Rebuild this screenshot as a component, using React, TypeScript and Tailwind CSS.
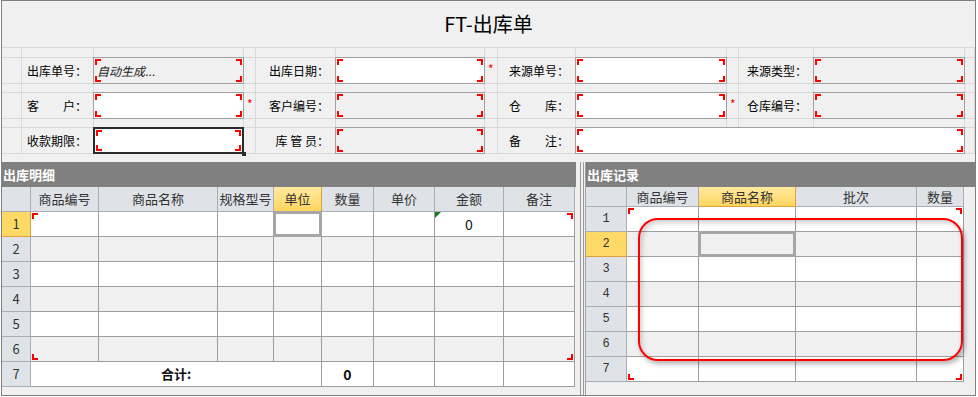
import React from 'react'

// red corner marks drawn inside a cell or field
function Brackets({ tl = true, tr = true, bl = true, br = true }: { tl?: boolean; tr?: boolean; bl?: boolean; br?: boolean }) {
  return (
    <>
      {tl && <span className="pointer-events-none absolute left-[1px] top-[1px] w-[6px] h-[6px] border-l-2 border-t-2 border-[#ff0000]" />}
      {tr && <span className="pointer-events-none absolute right-[1px] top-[1px] w-[6px] h-[6px] border-r-2 border-t-2 border-[#ff0000]" />}
      {bl && <span className="pointer-events-none absolute left-[1px] bottom-[1px] w-[6px] h-[6px] border-l-2 border-b-2 border-[#ff0000]" />}
      {br && <span className="pointer-events-none absolute right-[1px] bottom-[1px] w-[6px] h-[6px] border-r-2 border-b-2 border-[#ff0000]" />}
    </>
  )
}

function Cell() {
  return <div className="bg-[#f0f0f0]" />
}

function Label({ t }: { t: string }) {
  return <div className="bg-[#f0f0f0] flex items-center justify-end pr-[6px] text-[12px] text-black whitespace-pre">{t}</div>
}

function Star() {
  return <div className="bg-[#f0f0f0] flex items-center pl-[3px] pb-[4px] text-[12px] text-[#ff0000]">*</div>
}

function Field({ ro, sel, text, className = '' }: { ro?: boolean; sel?: boolean; text?: string; className?: string }) {
  return (
    <div
      className={`relative -m-px flex items-center ${ro ? 'bg-[#f0f0f0]' : 'bg-white'} ${sel ? 'border-2 border-[#2b2b2b]' : 'border border-[#a0a0a0]'} ${className}`}
    >
      {text && <span className="pl-[3px] text-[12px] italic text-[#222]">{text}</span>}
      <Brackets />
      {sel && <span className="absolute -right-[4px] -bottom-[4px] w-[4px] h-[4px] bg-[#2b2b2b]" />}
    </div>
  )
}

function Spacers() {
  return (
    <>
      {Array.from({ length: 13 }).map((_, i) => (
        <Cell key={i} />
      ))}
    </>
  )
}

function HeadForm() {
  return (
    <div className="grid grid-cols-[19px_71px_149px_11px_79px_148px_12px_77px_150px_11px_74px_150px_9px] grid-rows-[9px_25px_8px_25px_8px_25px] gap-px bg-[#d9d9d9] border-y border-[#d9d9d9]">
      <Spacers />
      <Cell />
      <Label t="出库单号：" />
      <Field ro text="自动生成..." />
      <Cell />
      <Label t="出库日期：" />
      <Field />
      <Star />
      <Label t="来源单号：" />
      <Field />
      <Cell />
      <Label t="来源类型：" />
      <Field ro />
      <Cell />

      <Spacers />
      <Cell />
      <Label t="客　　户：" />
      <Field />
      <Star />
      <Label t="客户编号：" />
      <Field ro />
      <Cell />
      <Label t="仓　　库：" />
      <Field />
      <Star />
      <Label t="仓库编号：" />
      <Field ro />
      <Cell />

      <Spacers />
      <Cell />
      <Label t="收款期限：" />
      <Field sel />
      <Cell />
      <Label t="库 管 员：" />
      <Field ro />
      <Cell />
      <Label t="备　　注：" />
      <Field className="col-span-4" />
      <Cell />
    </div>
  )
}

function Selection() {
  return (
    <>
      <span className="pointer-events-none absolute -left-px -top-px -right-px -bottom-px border-[3px] border-[#a6a6a6]" />
      <span className="pointer-events-none absolute -right-[3px] -bottom-[3px] w-[5px] h-[5px] bg-[#a6a6a6]" />
    </>
  )
}

function LeftTable() {
  const heads = ['商品编号', '商品名称', '规格型号', '单位', '数量', '单价', '金额', '备注']
  return (
    <div className="grid grid-cols-[29px_68px_119px_56px_48px_52px_61px_69px_71px] auto-rows-[25px] text-[13px]">
      <div className="bg-[#dfe3e8] border-r border-b border-[#a9aeb6]" />
      {heads.map(h =>
        h === '单位' ? (
          <div key={h} className="bg-linear-to-b from-[#ffeaa0] to-[#ffd45c] border-r border-b border-[#e0a33a] flex items-center justify-center text-[#333]">{h}</div>
        ) : (
          <div key={h} className="bg-[#dfe3e8] border-r border-b border-[#a9aeb6] flex items-center justify-center text-[#333]">{h}</div>
        )
      )}
      {[1, 2, 3, 4, 5, 6].map(r => {
        const bg = r % 2 === 0 ? 'bg-[#f0f0f0]' : 'bg-white'
        return (
          <React.Fragment key={r}>
            {r === 1 ? (
              <div className="bg-[#ffd966] border-r border-b border-[#e0a33a] flex items-center justify-center text-[#333]">{r}</div>
            ) : (
              <div className="bg-[#dfe3e8] border-r border-b border-[#a9aeb6] flex items-center justify-center text-[#333]">{r}</div>
            )}
            {heads.map((h, c) => (
              <div key={h} className={`relative ${bg} border-r border-b border-[#9e9e9e] flex items-center justify-center text-[14px] text-[#111]`}>
                {r === 1 && c === 0 && <Brackets tr={false} bl={false} br={false} />}
                {r === 1 && c === 7 && <Brackets tl={false} bl={false} br={false} />}
                {r === 6 && c === 0 && <Brackets tl={false} tr={false} br={false} />}
                {r === 6 && c === 7 && <Brackets tl={false} tr={false} bl={false} />}
                {r === 1 && c === 3 && <Selection />}
                {r === 1 && c === 6 && (
                  <>
                    <span className="absolute left-0 top-0 w-0 h-0 border-t-[6px] border-r-[6px] border-t-[#1e7a1e] border-r-transparent" />
                    0
                  </>
                )}
              </div>
            ))}
          </React.Fragment>
        )
      })}
      <div className="bg-[#dfe3e8] border-r border-b border-[#a9aeb6] flex items-center justify-center text-[#333]">7</div>
      <div className="col-span-4 bg-white border-r border-b border-[#9e9e9e] flex items-center justify-center font-bold text-[#111]">合计:</div>
      <div className="bg-white border-r border-b border-[#9e9e9e] flex items-center justify-center font-bold text-[14px] text-[#111]">0</div>
      <div className="bg-white border-r border-b border-[#9e9e9e]" />
      <div className="bg-white border-r border-b border-[#9e9e9e]" />
      <div className="bg-white border-r border-b border-[#9e9e9e]" />
    </div>
  )
}

function RightTable() {
  const heads = ['商品编号', '商品名称', '批次', '数量']
  return (
    <div className="grid grid-cols-[41px_72px_97px_121px_47px] grid-rows-[20px_repeat(7,25px)] text-[12px]">
      <div className="bg-[#dfe3e8] border-r border-b border-[#a9aeb6]" />
      {heads.map(h =>
        h === '商品名称' ? (
          <div key={h} className="bg-linear-to-b from-[#ffeaa0] to-[#ffd45c] border-r border-b border-[#e0a33a] flex items-center justify-center text-[13px] text-[#333]">{h}</div>
        ) : (
          <div key={h} className="bg-[#dfe3e8] border-r border-b border-[#a9aeb6] flex items-center justify-center text-[13px] text-[#333]">{h}</div>
        )
      )}
      {[1, 2, 3, 4, 5, 6, 7].map(r => {
        const bg = r % 2 === 0 ? 'bg-[#f0f0f0]' : 'bg-white'
        return (
          <React.Fragment key={r}>
            {r === 2 ? (
              <div className="bg-[#ffd966] border-r border-b border-[#e0a33a] flex items-center justify-center font-['Liberation_Mono',monospace] text-[#333]">{r}</div>
            ) : (
              <div className="bg-[#dfe3e8] border-r border-b border-[#a9aeb6] flex items-center justify-center font-['Liberation_Mono',monospace] text-[#333]">{r}</div>
            )}
            {heads.map((h, c) => (
              <div key={h} className={`relative ${bg} border-r border-b border-[#9e9e9e]`}>
                {r === 1 && c === 0 && <Brackets tr={false} bl={false} br={false} />}
                {r === 1 && c === 3 && <Brackets tl={false} bl={false} br={false} />}
                {r === 7 && c === 0 && <Brackets tl={false} tr={false} br={false} />}
                {r === 7 && c === 3 && <Brackets tl={false} tr={false} bl={false} />}
                {r === 2 && c === 1 && <Selection />}
              </div>
            ))}
          </React.Fragment>
        )
      })}
    </div>
  )
}

export default function App() {
  return (
    <div className="w-[978px] h-[397px] bg-white font-['Noto_Sans_CJK_SC','Noto_Sans',sans-serif]">
      <div className="ml-px w-[975px] h-[396px] border border-[#808080] bg-[#f0f0f0] flex flex-col">
        <div className="h-[46px] flex items-center justify-center text-[20px] text-black">FT-出库单</div>
        <HeadForm />

        <div className="mt-2 flex flex-1 min-h-0">
          <div className="w-[574px] flex flex-col">
            <div className="h-[25px] bg-[#808080] flex items-center pl-px text-[13px] font-bold text-white">出库明细</div>
            <LeftTable />
          </div>

          <div className="w-[9px] flex">
            <div className="w-[4px]" />
            <div className="w-px bg-[#9a9a9a]" />
            <div className="w-[2px]" />
            <div className="w-px bg-[#9a9a9a]" />
          </div>

          <div className="relative flex-1 flex flex-col border-l border-[#a0a0a0]">
            <div className="h-[25px] bg-[#808080] flex items-center pl-px text-[13px] font-bold text-white">出库记录</div>
            <RightTable />
            <div className="pointer-events-none absolute left-[52px] top-[56px] w-[325px] h-[143px] rounded-[20px] border-2 border-[#ff0000] shadow-[2px_3px_5px_rgba(0,0,0,0.3),inset_2px_3px_5px_rgba(0,0,0,0.18)]" />
          </div>
        </div>
      </div>
    </div>
  )
}
